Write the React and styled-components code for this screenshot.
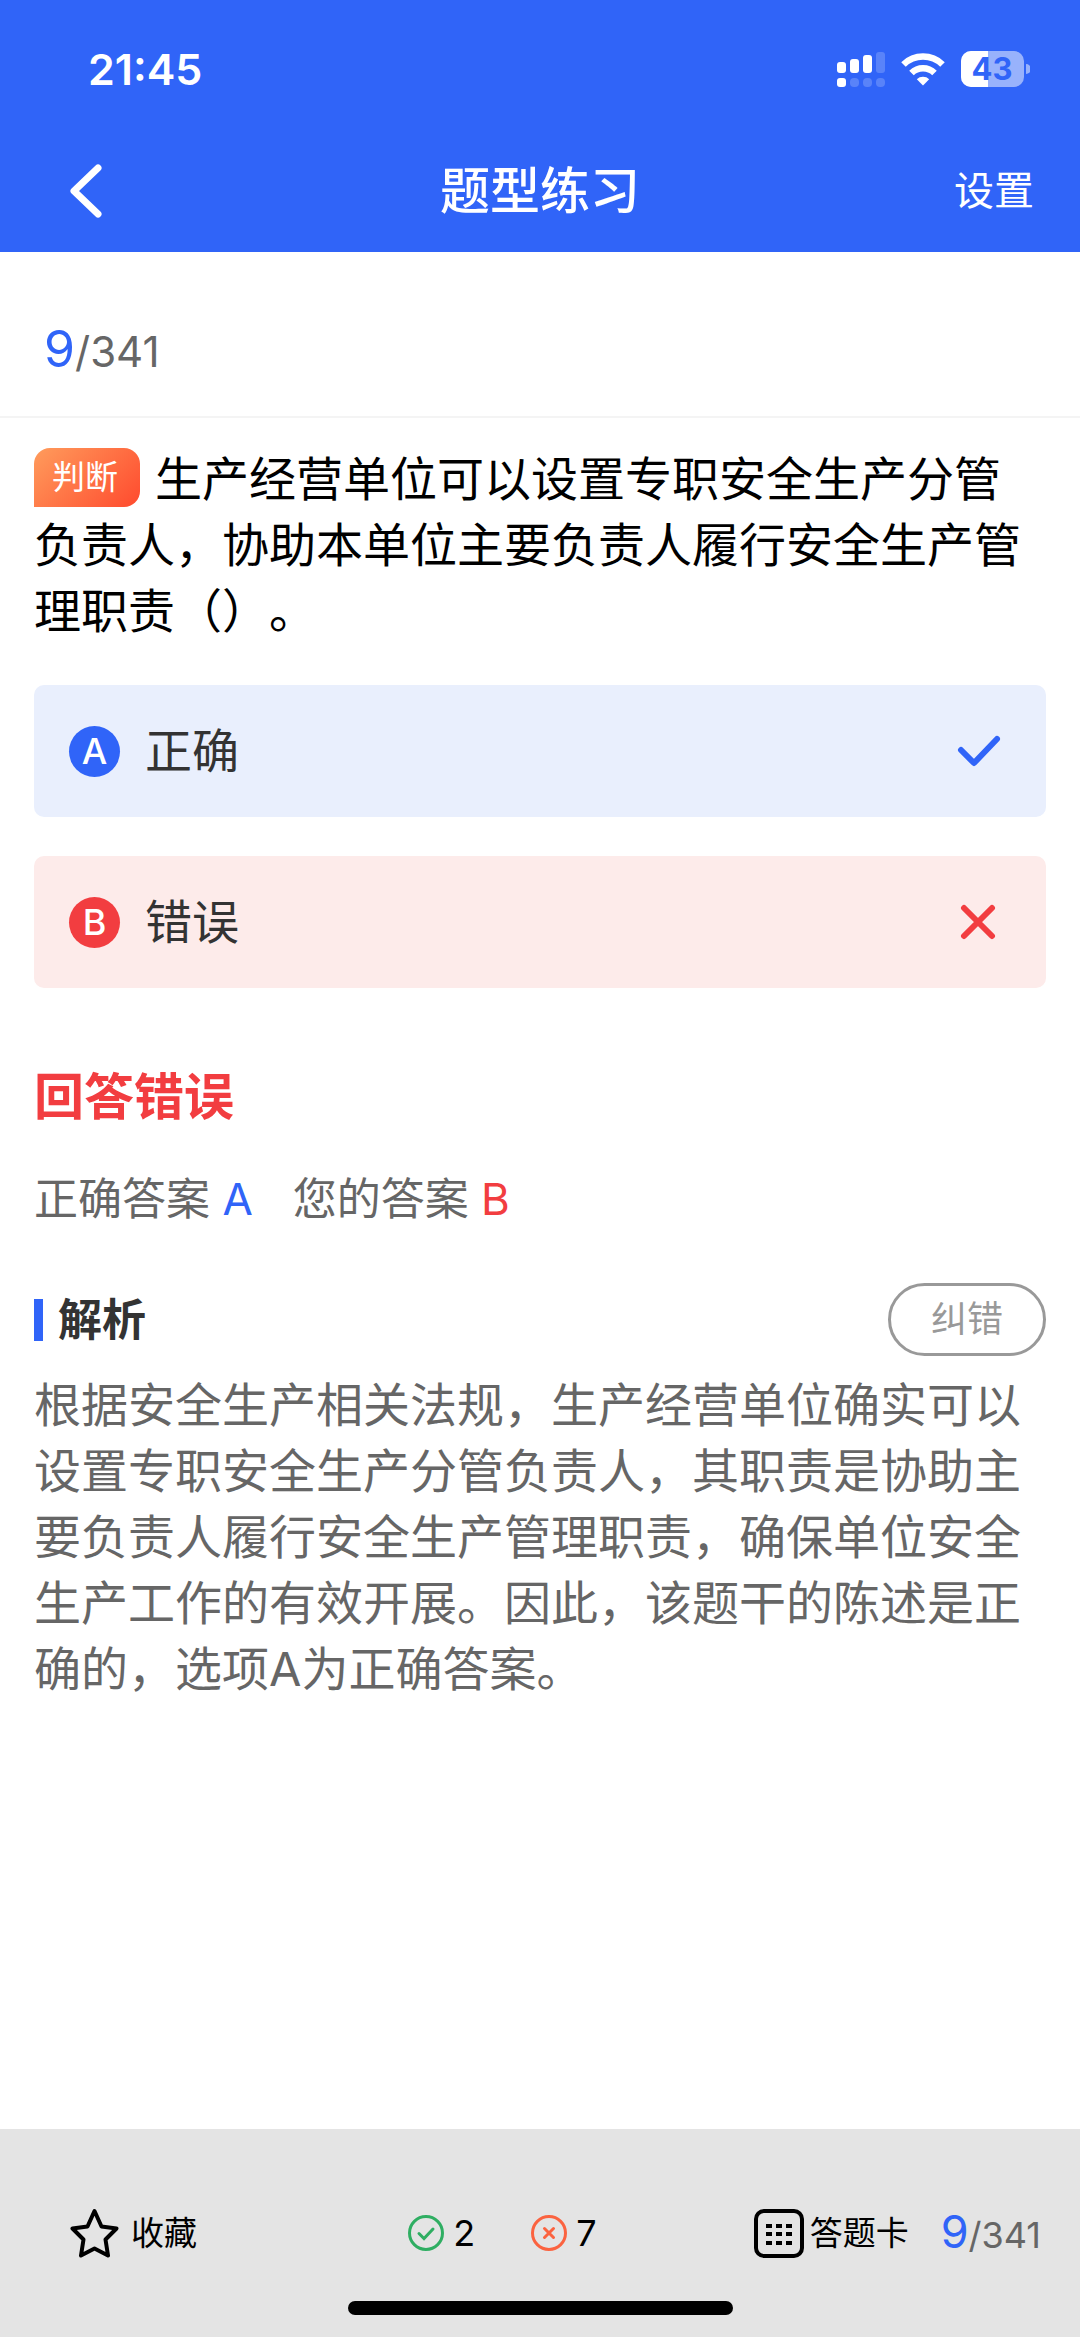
import React from 'react';
import { useState } from 'react';
import styled, { createGlobalStyle } from 'styled-components';

const COLORS = {
  blue: '#3064f8',
  blueLight: '#e9effd',
  red: '#f23d40',
  redLight: '#fdebea',
  green: '#2fae62',
  orange: '#fb6340',
  dark: '#333333',
  gray: '#666666',
  grayLight: '#999999',
  footer: '#e4e4e4',
  white: '#ffffff',
};

const GlobalStyle = createGlobalStyle`
  * {
    box-sizing: border-box;
  }

  body {
    margin: 0;
    background-color: ${COLORS.white};
    font-family: Inter, 'Noto Sans CJK SC', sans-serif;
    text-spacing-trim: space-all;
  }

  button {
    padding: 0;
    border: none;
    background: none;
    color: inherit;
    font-family: inherit;
    cursor: pointer;
  }

  svg {
    display: block;
    flex: none;
  }
`;

const Page = styled.div`
  display: flex;
  flex-flow: column nowrap;
  min-height: 100vh;
`;

const Header = styled.header`
  background-color: ${COLORS.blue};
  color: ${COLORS.white};
`;

const StatusBar = styled.div`
  display: flex;
  align-items: center;
  justify-content: space-between;
  height: 130px;
  padding: 8px 50px 0 88px;
`;

const Clock = styled.div`
  font-size: 43px;
  font-weight: 600;
  line-height: 50px;
`;

const StatusIcons = styled.div`
  display: flex;
  align-items: center;
  gap: 16px;
`;

const NavBar = styled.nav`
  display: grid;
  grid-template-columns: 1fr auto 1fr;
  align-items: center;
  height: 122px;
  padding: 0 46px;
`;

const BackButton = styled.button`
  justify-self: start;
  padding: 0 22px;
`;

const Title = styled.h1`
  margin: 0;
  font-size: 50px;
  font-weight: 500;
  line-height: 60px;
`;

const SettingsButton = styled.button`
  justify-self: end;
  font-size: 40px;
  line-height: 60px;
`;

const ProgressBar = styled.div`
  display: flex;
  align-items: center;
  height: 166px;
  padding: 32px 44px 0;
  border-bottom: 2px solid #f4f4f4;
`;

const Count = styled.div`
  color: ${COLORS.gray};
  font-size: ${(props) => (props.$small ? '36px' : '42px')};
  line-height: 60px;
`;

const Current = styled.span`
  color: ${COLORS.blue};
  font-size: ${(props) => (props.$small ? '45px' : '50px')};
`;

const Content = styled.main`
  flex: 1;
  padding: 28px 34px 40px;
`;

const Question = styled.p`
  margin: 0;
  color: black;
  font-size: 47px;
  line-height: 66px;
`;

const Tag = styled.span`
  display: inline-block;
  margin-right: 15px;
  padding: 0 22px 0 18px;
  border-radius: 16px 16px 16px 0;
  background-image: linear-gradient(135deg, #ff9c5c, #ff4a2e);
  color: ${COLORS.white};
  font-size: 33px;
  line-height: 59px;
  vertical-align: text-bottom;
`;

const Options = styled.div`
  display: flex;
  flex-flow: column nowrap;
  gap: 39px;
  margin-top: 41px;
`;

const Option = styled.button`
  display: flex;
  align-items: center;
  gap: 25px;
  height: 132px;
  padding: 0 44px 0 35px;
  border-radius: 10px;
  background-color: ${(props) => (props.$correct ? COLORS.blueLight : COLORS.redLight)};
  color: ${COLORS.dark};
  font-size: 47px;
  line-height: 66px;
  text-align: left;
`;

const Letter = styled.span`
  display: flex;
  align-items: center;
  justify-content: center;
  width: 51px;
  height: 51px;
  border-radius: 50%;
  background-color: ${(props) => (props.$correct ? COLORS.blue : COLORS.red)};
  color: ${COLORS.white};
  font-size: 36px;
  font-weight: 500;
`;

const OptionText = styled.span`
  flex: 1;
`;

const Result = styled.h2`
  margin: 76px 0 0;
  color: ${COLORS.red};
  font-size: 50px;
  font-weight: 700;
  line-height: 66px;
`;

const Answers = styled.div`
  display: flex;
  gap: 40px;
  margin-top: 36px;
  color: ${COLORS.gray};
  font-size: 44px;
  line-height: 66px;
`;

const AnswerLetter = styled.span`
  color: ${(props) => (props.$correct ? COLORS.blue : COLORS.red)};
`;

const AnalysisHeader = styled.div`
  display: flex;
  align-items: center;
  justify-content: space-between;
  margin-top: 51px;
`;

const AnalysisTitle = styled.h3`
  display: flex;
  align-items: center;
  gap: 15px;
  margin: 0;
  color: ${COLORS.dark};
  font-size: 44px;
  font-weight: 700;
  line-height: 66px;

  &::before {
    content: '';
    width: 9px;
    height: 42px;
    background-color: ${COLORS.blue};
  }
`;

const ReportButton = styled.button`
  padding: 0 40px;
  border: 3px solid ${COLORS.grayLight};
  border-radius: 37px;
  color: ${COLORS.grayLight};
  font-size: 36px;
  line-height: 67px;
`;

const Analysis = styled.p`
  margin: 16px 0 0;
  color: ${COLORS.gray};
  font-size: 47px;
  line-height: 66px;
`;

const Footer = styled.footer`
  background-color: ${COLORS.footer};
  color: black;
`;

const Toolbar = styled.div`
  display: flex;
  align-items: center;
  justify-content: space-between;
  height: 172px;
  padding: 36px 39px 0 70px;
`;

const ToolButton = styled.button`
  display: flex;
  align-items: center;
  gap: ${(props) => props.$gap};
  font-size: 33px;
  line-height: 60px;
`;

const Group = styled.div`
  display: flex;
  align-items: center;
  gap: 32px;
`;

const Scores = styled.div`
  display: flex;
  align-items: center;
  gap: 56px;
  padding-left: 54px;
`;

const Score = styled.div`
  display: flex;
  align-items: center;
  gap: 9px;
  font-size: 36px;
  line-height: 60px;
`;

const HomeIndicator = styled.div`
  width: 385px;
  height: 14px;
  margin: 0 auto 22px;
  border-radius: 7px;
  background-color: black;
`;

const SignalIcon = () => (
  <svg width="48" height="36" viewBox="0 0 48 36" fill="white">
    <rect x="0" y="11" width="9" height="11" rx="3" />
    <rect x="13" y="8" width="9" height="14" rx="3" />
    <rect x="26" y="4" width="9" height="18" rx="3" />
    <rect x="39" y="1" width="9" height="21" rx="3" opacity="0.2" />
    <rect x="0" y="27" width="9" height="9" rx="3" />
    <rect x="13" y="27" width="9" height="9" rx="4" opacity="0.2" />
    <rect x="26" y="27" width="9" height="9" rx="4" opacity="0.2" />
    <rect x="39" y="27" width="9" height="9" rx="4" opacity="0.2" />
  </svg>
);

const WifiIcon = () => (
  <svg width="44" height="34" viewBox="0 0 44 34">
    <path d="M2.5 12.5a28 28 0 0 1 39 0" fill="none" stroke="white" strokeWidth="6.5" />
    <path d="M10.5 21a16.5 16.5 0 0 1 23 0" fill="none" stroke="white" strokeWidth="6.5" />
    <path d="M22 33.5l-6.2-6.2a9 9 0 0 1 12.4 0z" fill="white" />
  </svg>
);

const BatteryIcon = () => (
  <svg width="69" height="36" viewBox="0 0 69 36">
    <rect width="63" height="36" rx="10" fill="white" opacity="0.5" />
    <path d="M10 0H27V36H10A10 10 0 0 1 0 26V10A10 10 0 0 1 10 0z" fill="white" />
    <path d="M65 13a5 5 0 0 1 0 10z" fill="white" opacity="0.5" />
    <text
      x="31"
      y="29"
      textAnchor="middle"
      fontFamily="Inter, sans-serif"
      fontSize="31"
      fontWeight="700"
      fill={COLORS.blue}
    >
      43
    </text>
  </svg>
);

const BackIcon = () => (
  <svg width="34" height="54" viewBox="0 0 34 54" fill="none" stroke="white" strokeWidth="7">
    <path d="M30 4L6 27l24 23" strokeLinecap="round" strokeLinejoin="round" />
  </svg>
);

const CheckIcon = () => (
  <svg width="46" height="36" viewBox="0 0 46 36" fill="none" stroke={COLORS.blue} strokeWidth="6">
    <path d="M5 17l13 13L41 6" strokeLinecap="round" strokeLinejoin="round" />
  </svg>
);

const CrossIcon = () => (
  <svg width="46" height="36" viewBox="0 0 46 36" fill="none" stroke={COLORS.red} strokeWidth="6">
    <path d="M8 4l28 28M36 4L8 32" strokeLinecap="round" />
  </svg>
);

const StarIcon = () => (
  <svg width="49" height="50" viewBox="0 0 49 50" fill="none" stroke="black" strokeWidth="4">
    <path
      d="M24.5 3L31.5 18.5L46.5 20.5L35.5 31.5L38 47.5L24.5 40.5L11 47.5L13.5 31.5L2.5 20.5L17.5 18.5z"
      strokeLinejoin="round"
    />
  </svg>
);

const RightIcon = () => (
  <svg width="36" height="36" viewBox="0 0 36 36" fill="none" stroke={COLORS.green}>
    <circle cx="18" cy="18" r="16.5" strokeWidth="3" />
    <path d="M11 18.5l5 5L25 14" strokeWidth="3" strokeLinecap="round" />
  </svg>
);

const WrongIcon = () => (
  <svg width="36" height="36" viewBox="0 0 36 36" fill="none" stroke={COLORS.orange}>
    <circle cx="18" cy="18" r="16.5" strokeWidth="3" />
    <path d="M13.5 13.5l9 9M22.5 13.5l-9 9" strokeWidth="3" strokeLinecap="round" />
  </svg>
);

const CardIcon = () => (
  <svg width="50" height="49" viewBox="0 0 50 49">
    <rect x="2" y="2" width="46" height="45" rx="8" fill="none" stroke="black" strokeWidth="4" />
    {[15, 23, 32].map((y) =>
      [12, 22, 32].map((x) => <rect key={`${x}-${y}`} x={x} y={y} width="6" height="4" />)
    )}
  </svg>
);

const options = [
  { letter: 'A', text: '正确', correct: true },
  { letter: 'B', text: '错误', correct: false },
];

const Progress = (props) => (
  <Count $small={props.small}>
    <Current $small={props.small}>{props.current}</Current>/{props.total}
  </Count>
);

const App = () => {
  const [answer, setAnswer] = useState('B');

  return (
    <Page>
      <GlobalStyle />
      <Header>
        <StatusBar>
          <Clock>21:45</Clock>
          <StatusIcons>
            <SignalIcon />
            <WifiIcon />
            <BatteryIcon />
          </StatusIcons>
        </StatusBar>
        <NavBar>
          <BackButton aria-label="返回">
            <BackIcon />
          </BackButton>
          <Title>题型练习</Title>
          <SettingsButton>设置</SettingsButton>
        </NavBar>
      </Header>
      <ProgressBar>
        <Progress current={9} total={341} />
      </ProgressBar>
      <Content>
        <Question>
          <Tag>判断</Tag>
          生产经营单位可以设置专职安全生产分管负责人，协助本单位主要负责人履行安全生产管理职责（）。
        </Question>
        <Options>
          {options.map((option) => (
            <Option
              key={option.letter}
              $correct={option.correct}
              onClick={() => setAnswer(option.letter)}
            >
              <Letter $correct={option.correct}>{option.letter}</Letter>
              <OptionText>{option.text}</OptionText>
              {option.correct ? <CheckIcon /> : <CrossIcon />}
            </Option>
          ))}
        </Options>
        <Result>{answer === 'A' ? '回答正确' : '回答错误'}</Result>
        <Answers>
          <span>
            正确答案 <AnswerLetter $correct>A</AnswerLetter>
          </span>
          <span>
            您的答案 <AnswerLetter $correct={answer === 'A'}>{answer}</AnswerLetter>
          </span>
        </Answers>
        <AnalysisHeader>
          <AnalysisTitle>解析</AnalysisTitle>
          <ReportButton>纠错</ReportButton>
        </AnalysisHeader>
        <Analysis>
          根据安全生产相关法规，生产经营单位确实可以设置专职安全生产分管负责人，其职责是协助主要负责人履行安全生产管理职责，确保单位安全生产工作的有效开展。因此，该题干的陈述是正确的，选项A为正确答案。
        </Analysis>
      </Content>
      <Footer>
        <Toolbar>
          <ToolButton $gap="12px">
            <StarIcon />
            收藏
          </ToolButton>
          <Scores>
            <Score>
              <RightIcon />2
            </Score>
            <Score>
              <WrongIcon />7
            </Score>
          </Scores>
          <Group>
            <ToolButton $gap="6px">
              <CardIcon />
              答题卡
            </ToolButton>
            <Progress small current={9} total={341} />
          </Group>
        </Toolbar>
        <HomeIndicator />
      </Footer>
    </Page>
  );
};

export default App;
